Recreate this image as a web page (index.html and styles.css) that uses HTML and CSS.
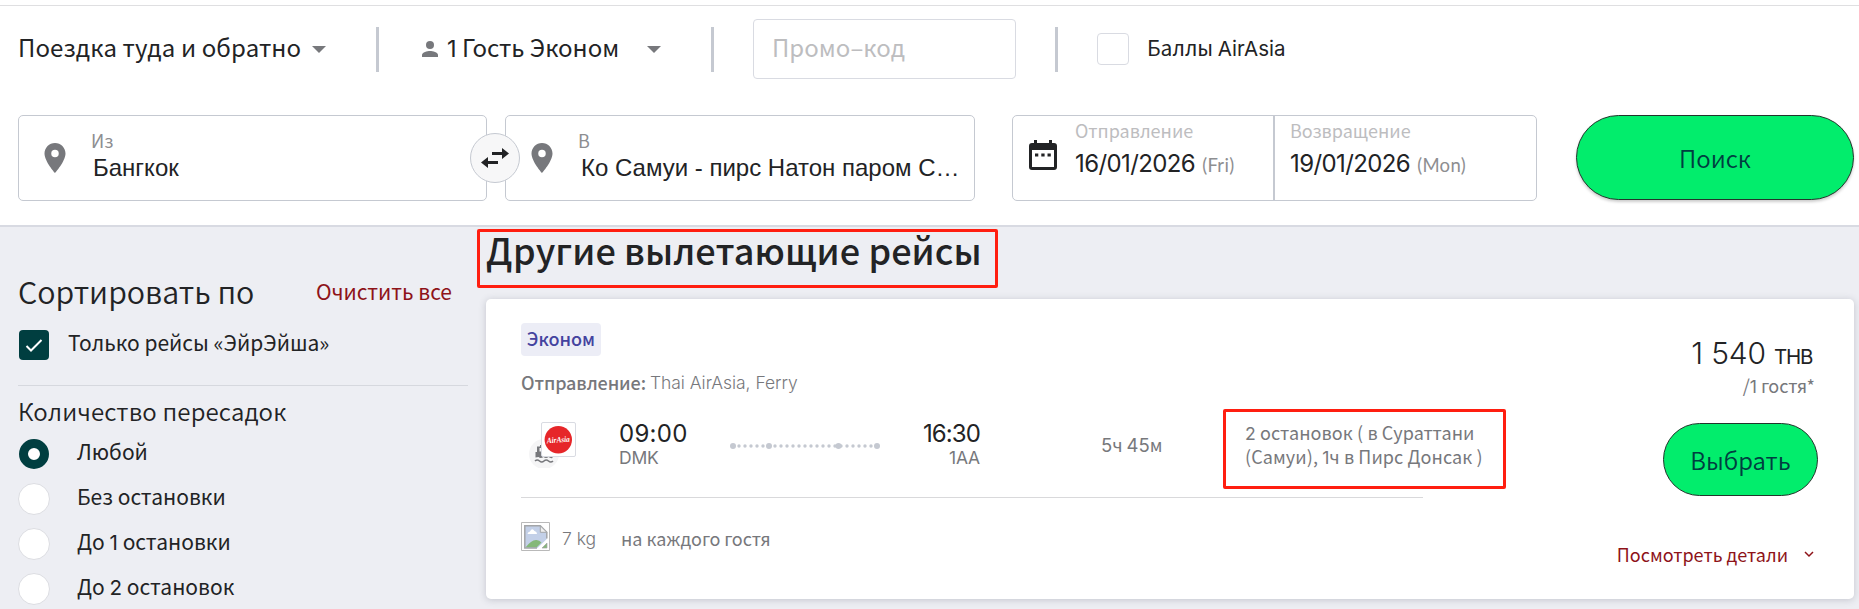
FILE: index.html
```html
<!DOCTYPE html>
<html lang="ru">
<head>
<meta charset="utf-8">
<title>Рейсы</title>
<link rel="stylesheet" href="styles.css">
</head>
<body>
<header class="search">
  <div class="options">
    <span class="trip">Поездка туда и обратно</span><i class="caret caret-trip"></i>
    <i class="bar bar-1"></i>
    <svg class="person" viewBox="0 0 16 16"><circle cx="8" cy="4" r="4"/><path d="M0 16v-2c0-2.700 5.300-4 8-4s8 1.300 8 4v2z"/></svg>
    <span class="guests"><span class="num">1</span> Гость Эконом</span><i class="caret caret-guests"></i>
    <i class="bar bar-2"></i>
    <div class="promo"><span>Промо–код</span></div>
    <i class="bar bar-3"></i>
    <i class="points-box"></i>
    <span class="points">Баллы <b>AirAsia</b></span>
  </div>
  <div class="fields">
    <div class="place">
      <svg class="pin" viewBox="5 2 14 20"><path d="M12 2C8.130 2 5 5.130 5 9c0 5.250 7 13 7 13s7-7.750 7-13c0-3.870-3.130-7-7-7zm0 9.500a2.500 2.500 0 1 1 0-5 2.500 2.500 0 0 1 0 5z"/></svg>
      <div class="place-text"><span class="label">Из</span><span class="city city-from">Бангкок</span></div>
      <div class="swap"><svg viewBox="0 0 28 20"><path d="M11 4h10V0l7 5.500-7 5.500V7H11zM17 13H7V9l-7 5.500L7 20v-4h10z"/></svg></div>
    </div>
    <div class="place place-to">
      <svg class="pin" viewBox="5 2 14 20"><path d="M12 2C8.130 2 5 5.130 5 9c0 5.250 7 13 7 13s7-7.750 7-13c0-3.870-3.130-7-7-7zm0 9.500a2.500 2.500 0 1 1 0-5 2.500 2.500 0 0 1 0 5z"/></svg>
      <div class="place-text"><span class="label">В</span><span class="city city-to">Ко Самуи - пирс Натон паром С…</span></div>
    </div>
    <div class="dates">
      <div class="date date-out">
        <svg class="cal" viewBox="0 0 28 30"><path fill-rule="evenodd" d="M5 0h3v3h12V0h3v3h2q3 0 3 3v21q0 3-3 3H3q-3 0-3-3V6q0-3 3-3h2zM3 10v17h22V10z"/><path d="M6 13.500h3.300v3H6zM12.300 13.500h3.300v3h-3.300zM18.500 13.500h3.300v3h-3.300z"/></svg>
        <div><span class="date-label">Отправление</span><span class="date-value">16/01/2026</span><span class="day">(Fri)</span></div>
      </div>
      <div class="date date-back">
        <div><span class="date-label">Возвращение</span><span class="date-value">19/01/2026</span><span class="day">(Mon)</span></div>
      </div>
    </div>
    <button class="btn find">Поиск</button>
  </div>
</header>
<div class="content">
  <aside class="filters">
    <div class="filters-head"><h2>Сортировать по</h2><a class="clear">Очистить все</a></div>
    <div class="only"><span class="tick"><svg viewBox="0 0 17 13"><path d="M1 7l4.500 4.500L16 1"/></svg></span><span class="only-text">Только рейсы «ЭйрЭйша»</span></div>
    <h3>Количество пересадок</h3>
    <div class="radio on"><i></i><span>Любой</span></div>
    <div class="radio"><i></i><span>Без остановки</span></div>
    <div class="radio"><i></i><span>До <b class="num">1</b> остановки</span></div>
    <div class="radio"><i></i><span>До <b class="num">2</b> остановок</span></div>
  </aside>
  <main class="results">
    <h1>Другие вылетающие рейсы</h1>
    <div class="mark mark-title"></div>
    <article class="card">
      <div class="info">
        <span class="badge">Эконом</span>
        <p class="carrier"><b>Отправление:</b><span>Thai AirAsia, Ferry</span></p>
        <div class="flight">
          <svg class="logo" viewBox="0 0 50 48">
            <circle cx="15" cy="34" r="15" fill="#f5f5f6"/>
            <path fill="#77787c" d="M6.500 37.500V32H8v-5.500h3V25h4v3h-4.500v3.500h13V38q-2 .5-4-1-2.500 2-5 0-3 2-5 0z"/>
            <path fill="none" stroke="#77787c" stroke-width="1.600" d="M6 41q2.200-2 4.500 0t4.500 0 4.500 0 4.500 0"/>
            <rect x="12.500" y="2.500" width="34" height="34" rx="1.500" fill="#fff" stroke="#d9dbe2"/>
            <circle cx="29.300" cy="19.700" r="13.700" fill="#e62629"/>
            <text x="29.300" y="22.500" class="logo-text" text-anchor="middle" textLength="23" lengthAdjust="spacingAndGlyphs" transform="rotate(-4 29 20)">AirAsia</text>
          </svg>
          <div class="time time-dep"><span>09:00</span><small>DMK</small></div>
          <svg class="route" viewBox="0 0 150 6"><path d="M9 3h138" stroke="#c5c9d1" stroke-width="3.400" stroke-linecap="round" stroke-dasharray="0 6"/><g fill="#c5c9d1"><circle cx="3" cy="3" r="3"/><circle cx="39" cy="3" r="3"/><circle cx="108.500" cy="3" r="3"/><circle cx="147" cy="3" r="3"/></g></svg>
          <div class="time time-arr"><span>16:30</span><small>1AA</small></div>
          <span class="duration"><span class="num">5</span>ч <span class="num">45</span>м</span>
          <div class="stops"><span class="stop-a"><span class="num">2</span> остановок ( в Сураттани</span><span class="stop-b">(Самуи), <span class="num">1</span>ч в Пирс Донсак )</span><div class="mark mark-stops"></div></div>
        </div>
        <div class="bags">
          <svg class="broken" viewBox="0 0 29 29"><path fill="#fff" stroke="#b9b9b9" d="M.5.500h28v28H.5z"/><path fill="#c3d0e8" d="M3.800 3.800h15l7 6.500V17L16.500 26H3.800z"/><path fill="#fff" d="M6.500 12q0-2 2.500-2.500Q11 5.500 13.500 9q2.500.5 2.500 3z"/><path fill="#84b878" d="M4.500 25.500q6-8 11-7.500 3 .2 5 2.500l-5 5z"/><path fill="none" stroke="#a3a5a8" stroke-width="1.500" d="M25.800 16.500V10.300l-6.500-6.500H3.800V26H16"/><path fill="#eee" stroke="#a3a5a8" d="M19.300 3.800v6.500h6.500z"/><path fill="#84b878" stroke="#a3a5a8" stroke-width=".7" d="M21 26l5-5v5z"/></svg>
          <span class="kg">7 kg</span><span class="each">на каждого гостя</span>
        </div>
      </div>
      <div class="buy">
        <div class="price">1 540 <small>THB</small></div>
        <div class="per">/<span class="num">1</span> гостя*</div>
        <button class="btn pick">Выбрать</button>
        <a class="details"><span>Посмотреть детали</span><svg viewBox="0 0 10 7"><path d="M1 1l4 4 4-4"/></svg></a>
      </div>
    </article>
  </main>
</div>
</body>
</html>
```

FILE: styles.css
```css
* { box-sizing: border-box; }
body {
  margin: 0; width: 1859px; height: 609px; overflow: hidden; background: #fff; color: #222325;
  font: 21px/32px "Noto Sans CJK SC", "Noto Sans", sans-serif; white-space: nowrap;
}
h1, h2, h3, p { margin: 0; font-weight: 350; }
svg { display: block; flex: none; }
i, a, button, small { font-style: normal; flex: none; }
.num { font-family: Inter, sans-serif; font-weight: 400; font-size: .98em; line-height: 1; letter-spacing: 0; }

.search { height: 227px; padding: 5px 0 0; border-bottom: 2px solid #d8dae2; }
.options { display: flex; align-items: center; height: 87px; padding-left: 18px; border-top: 1px solid #dfdfe1; font-size: 24px; }
.trip { width: 294px; padding-bottom: 4px; letter-spacing: .11px; }
.caret { width: 0; border: 7px solid transparent; border-top: 7px solid #77787c; border-bottom: 0; }
.bar { width: 3px; height: 45px; background: #c5c9d1; }
.bar-1 { margin-left: 50px; }
.person { width: 16px; height: 16px; margin-left: 43px; fill: #77787c; }
.guests { width: 200px; margin-left: 9px; padding-bottom: 4px; }
.bar-2 { margin-left: 50px; }
.promo { width: 263px; height: 60px; margin-left: 39px; padding: 11px 18px; border: 1px solid #d9dbe2; border-radius: 4px; color: #bdbdbf; }
.bar-3 { margin-left: 39px; }
.points-box { width: 32px; height: 32px; margin-left: 39px; border: 1px solid #d9dbe2; border-radius: 4px; }
.points { margin-left: 18px; padding-bottom: 3px; font-size: 21px; }
.points b { font-family: Inter, sans-serif; font-weight: 400; font-size: 20.500px; }

.fields { display: flex; margin-top: 23px; padding-left: 18px; }
.place, .dates { display: flex; flex: none; height: 86px; border: 1px solid #c5c9d1; border-radius: 5px; }
.place { position: relative; width: 469px; padding: 27px 0 0 25px; }
.place-to { margin-left: 18px; width: 470px; }
.pin { width: 22px; height: 30px; fill: #77787c; }
.place-text { display: flex; flex-direction: column; margin: -15px 0 0 25px; }
.label { height: 24px; line-height: 24px; font-size: 18px; color: #8d8e91; }
.city { margin-left: 2px; font: 24px/32px "Liberation Sans", Arial, sans-serif; }
.city-to { margin-left: 3px; }
.swap { position: absolute; z-index: 1; top: 17px; right: -34px; width: 50px; height: 50px; padding: 14px 10px; border: 1px solid #c5c9d1; border-radius: 50%; background: #f7f7f8; }
.swap svg { width: 28px; height: 20px; fill: #222325; }
.dates { width: 525px; margin-left: 37px; }
.date { display: flex; padding-top: 2px; }
.date-out { width: 262px; padding-left: 16px; border-right: 2px solid #c5c9d1; }
.date-back { padding-left: 15px; }
.cal { width: 28px; height: 30px; margin: 22px 18px 0 0; fill: #222325; }
.date-label { display: block; height: 29px; line-height: 24px; font-size: 18px; color: #bdbdbf; }
.date-value { font: 24px/34px Inter, sans-serif; letter-spacing: -.6px; }
.day { margin-left: 7px; font: 18.500px/34px Lato, sans-serif; letter-spacing: .3px; color: #8d8e91; }
.btn { flex: none; border: 1px solid #23352c; border-radius: 43px; background: #02ed6c; color: #003e40; font: 350 24px/32px "Noto Sans CJK SC", sans-serif; padding: 0; }
.find { width: 278px; height: 85px; margin-left: 39px; box-shadow: 0 2px 3px rgba(0,0,0,.2); }

.content { display: flex; height: 382px; background: #edeef3; }
.filters { flex: none; width: 468px; padding: 43px 0 0 18px; }
.filters-head { display: flex; justify-content: space-between; align-items: center; height: 42px; padding-right: 16px; }
.filters-head h2 { font-size: 30.400px; }
.clear { color: #8e1319; }
.only { display: flex; align-items: center; height: 74px; padding-bottom: 8px; border-bottom: 1px solid #d6d8de; }
.tick { width: 30px; height: 30px; margin-left: 1px; padding: 9px 6px; border-radius: 4px; background: #003e40; }
.tick svg { width: 18px; height: 13px; fill: none; stroke: #fff; stroke-width: 2; }
.only-text { margin: -6px 0 0 19px; }
.filters h3 { margin-top: 7px; margin-bottom: 2px; font-size: 24px; line-height: 36px; letter-spacing: .15px; }
.radio { display: flex; align-items: center; height: 45px; }
.radio i { width: 32px; height: 32px; border: 1px solid #dcdde2; border-radius: 50%; background: #fff; }
.radio.on i { width: 30px; height: 30px; margin: 0 1px; border: 9px solid #003e40; }
.radio span { margin: -6px 0 0 27px; }

.results { position: relative; margin-left: 18px; }
.results h1 { height: 72px; line-height: 44px; font-size: 36px; font-weight: 500; letter-spacing: .08px; }
.mark { position: absolute; border: 3px solid #ff1e10; border-radius: 2px; }
.mark-title { left: -9px; top: 2px; width: 521px; height: 59px; }
.card { display: flex; width: 1368px; height: 300px; padding: 24px 35px 0; border-radius: 5px; background: #fff; box-shadow: 0 1px 7px rgba(70,75,95,.25); font-size: 18px; line-height: 24px; color: #77787c; }
.info { width: 902px; flex: none; }
.badge { display: block; width: 80px; height: 33px; line-height: 31px; text-align: center; border-radius: 4px; background: #ecedf6; color: #44439f; font-weight: 500; }
.carrier { display: flex; gap: 4px; margin-top: 14px; letter-spacing: -.1px; }
.carrier b { font-weight: 500; }
.carrier span, .kg { padding-top: 1px; font-family: Inter, sans-serif; font-weight: 350; font-size: 17.500px; letter-spacing: -.03px; }
.flight { display: flex; align-items: center; height: 48px; margin-top: 25px; }
.flight > * { flex: none; }
.logo { width: 50px; height: 48px; margin-left: 8px; }
.logo-text { font: italic bold 8px "Liberation Serif", serif; fill: #fff; }
.time { display: flex; flex-direction: column; padding-top: 2px; font: 24px/26px Inter, sans-serif; letter-spacing: .3px; color: #222325; }
.time small { font-size: 17.500px; line-height: 22px; letter-spacing: -.2px; color: #77787c; }
.time-dep { width: 67px; margin-left: 40px; }
.time-arr { width: 57px; margin-left: 43px; align-items: flex-end; letter-spacing: -.9px; }
.route { width: 150px; height: 6px; margin: 4px 0 0 44px; }
.duration { width: 60px; margin-left: 121px; }
.duration .num { font-size: 18.500px; }
.stops { position: relative; display: flex; flex-direction: column; margin-left: 84px; letter-spacing: .1px; }
.mark-stops { left: -22px; top: -11px; width: 283px; height: 80px; }
.bags { display: flex; margin-top: 29px; padding-top: 24px; border-top: 1px solid #d9d9db; }
.broken { width: 29px; height: 29px; }
.kg { width: 34px; margin: 4px 0 0 12px; }
.each { margin: 4px 0 0 25px; }
.buy { display: flex; flex-direction: column; align-items: flex-end; flex: 1; }
.price { margin: 11px 7px 0 0; font: 350 30px/38px Inter, sans-serif; letter-spacing: -.2px; color: #222325; }
.price small { font-size: 20.500px; font-weight: 400; letter-spacing: -1.300px; }
.per { margin: -3px 4px 0 0; }
.pick { width: 155px; height: 73px; margin: 26px 1px 0 0; }
.details { display: flex; align-items: center; margin: 46px 5px 0 0; color: #8e1319; }
.details svg { width: 10px; height: 7px; margin-left: 16px; fill: none; stroke: #8e1319; stroke-width: 1.500; }
```
